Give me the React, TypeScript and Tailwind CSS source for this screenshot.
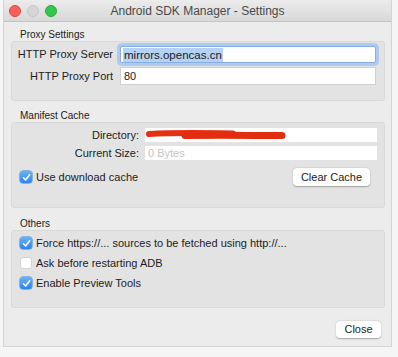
import React from 'react';

const FONT = { fontFamily: '"Liberation Sans", Arial, sans-serif' };

const CheckBox: React.FC<{ checked: boolean }> = ({ checked }) =>
  checked ? (
    <span className="flex h-[12px] w-[12px] items-center justify-center rounded-[3px] bg-gradient-to-b from-[#69b1f7] to-[#2a84ea] shadow-[0_0_0_0.5px_#2f7fd8]">
      <svg width="9" height="9" viewBox="0 0 9 9">
        <path d="M1.5 4.8 L3.6 7 L7.6 1.8" fill="none" stroke="#fff" strokeWidth="1.6" strokeLinecap="round" strokeLinejoin="round" />
      </svg>
    </span>
  ) : (
    <span className="h-[12px] w-[12px] rounded-[3px] border border-[#d4d4d4] bg-white" />
  );

const SectionLabel: React.FC<{ text: string; mt: string }> = ({ text, mt }) => (
  <div className={`${mt} h-[13px] pl-[9px] text-[10px] leading-[13px] text-[#222]`}>{text}</div>
);

const CheckRow: React.FC<{ checked: boolean; label: string }> = ({ checked, label }) => (
  <div className="flex h-[20px] items-center gap-[4px] pl-[8px]">
    <CheckBox checked={checked} />
    <span className="text-[11px] text-[#1c1c1c]">{label}</span>
  </div>
);

const MacButton: React.FC<{ label: string; w: string; h: string }> = ({ label, w, h }) => (
  <div
    className={`${w} ${h} flex items-center justify-center rounded-[4px] bg-white text-[11px] text-[#1c1c1c] shadow-[0_0.5px_1.5px_rgba(0,0,0,0.3)]`}
  >
    {label}
  </div>
);

export default function App() {
  return (
    <div style={FONT} className="h-[357px] w-[398px] bg-[#f5f5f5] pl-[4px]">
      <div className="flex h-[346px] w-[387px] flex-col bg-[#ececec] shadow-[0_0_0_1px_#d4d4d4]">
        {/* title bar */}
        <div className="grid h-[22px] grid-cols-[1fr_auto_1fr] items-center border-b border-[#c4c4c4] bg-gradient-to-b from-[#ececec] to-[#d8d8d8]">
          <div className="flex items-center gap-[6px] pl-[5px]">
            <span className="h-[12px] w-[12px] rounded-full border border-[#e0443e] bg-[#fc605c]" />
            <span className="h-[12px] w-[12px] rounded-full border border-[#c6c6c6] bg-[#d6d6d6]" />
            <span className="h-[12px] w-[12px] rounded-full border border-[#24a83a] bg-[#34c84a]" />
          </div>
          <div className="text-[12px] text-[#4a4a4a]">Android SDK Manager - Settings</div>
          <div />
        </div>

        <div className="flex flex-1 flex-col pl-[7px] pr-[6px]">
          <SectionLabel text="Proxy Settings" mt="mt-[6px]" />
          <div className="h-[60px] rounded-[3px] border border-[#d9d9d9] bg-[#e3e3e3] pr-[8px] pt-[4px]">
            <div className="grid grid-cols-[101px_1fr] gap-x-[7px] gap-y-[4px] text-[11px] text-[#1c1c1c]">
              <div className="text-right leading-[17px]">HTTP Proxy Server</div>
              <div className="flex h-[17px] items-center rounded-[2px] border border-[#86ade4] bg-white pl-[2px] shadow-[0_0_0_3px_#aecaf0]">
                <span className="bg-[#b5d1f4] px-[1px] text-[11.5px] leading-[14px]">mirrors.opencas.cn</span>
              </div>
              <div className="text-right leading-[18px]">HTTP Proxy Port</div>
              <div className="flex h-[18px] items-center border border-[#cfcfcf] bg-white pl-[3px]">80</div>
            </div>
          </div>

          <SectionLabel text="Manifest Cache" mt="mt-[8px]" />
          <div className="h-[86px] rounded-[3px] border border-[#d9d9d9] bg-[#e3e3e3] pr-[7px] pt-[5px]">
            <div className="grid grid-cols-[127px_1fr] gap-x-[6px] gap-y-[4px] text-[11px] text-[#1c1c1c]">
              <div className="text-right leading-[14px]">Directory:</div>
              <div className="flex h-[14px] items-center bg-white">
                <svg width="142" height="12" viewBox="0 0 142 12">
                  <path d="M4 5 C 30 3.5, 60 4, 88 4.5" fill="none" stroke="#e63014" strokeWidth="6" strokeLinecap="round" />
                  <path d="M40 6.5 C 80 6, 110 6.5, 137 6.5" fill="none" stroke="#e32d10" strokeWidth="7" strokeLinecap="round" />
                </svg>
              </div>
              <div className="text-right leading-[14px]">Current Size:</div>
              <div className="flex h-[14px] items-center bg-white pl-[3px] text-[#c4c4c4]">0 Bytes</div>
            </div>
            <div className="mt-[8px] flex h-[18px] items-center justify-between pl-[8px] pr-[7px]">
              <div className="flex items-center gap-[4px]">
                <CheckBox checked />
                <span className="text-[11px] text-[#1c1c1c]">Use download cache</span>
              </div>
              <MacButton label="Clear Cache" w="w-[77px]" h="h-[18px]" />
            </div>
          </div>

          <SectionLabel text="Others" mt="mt-[9px]" />
          <div className="h-[78px] rounded-[3px] border border-[#d9d9d9] bg-[#e3e3e3] pt-[2px]">
            <CheckRow checked label="Force https://... sources to be fetched using http://..." />
            <CheckRow checked={false} label="Ask before restarting ADB" />
            <CheckRow checked label="Enable Preview Tools" />
          </div>

          <div className="mt-[13px] flex justify-end pr-[4px]">
            <MacButton label="Close" w="w-[45px]" h="h-[17px]" />
          </div>
        </div>
      </div>
    </div>
  );
}
